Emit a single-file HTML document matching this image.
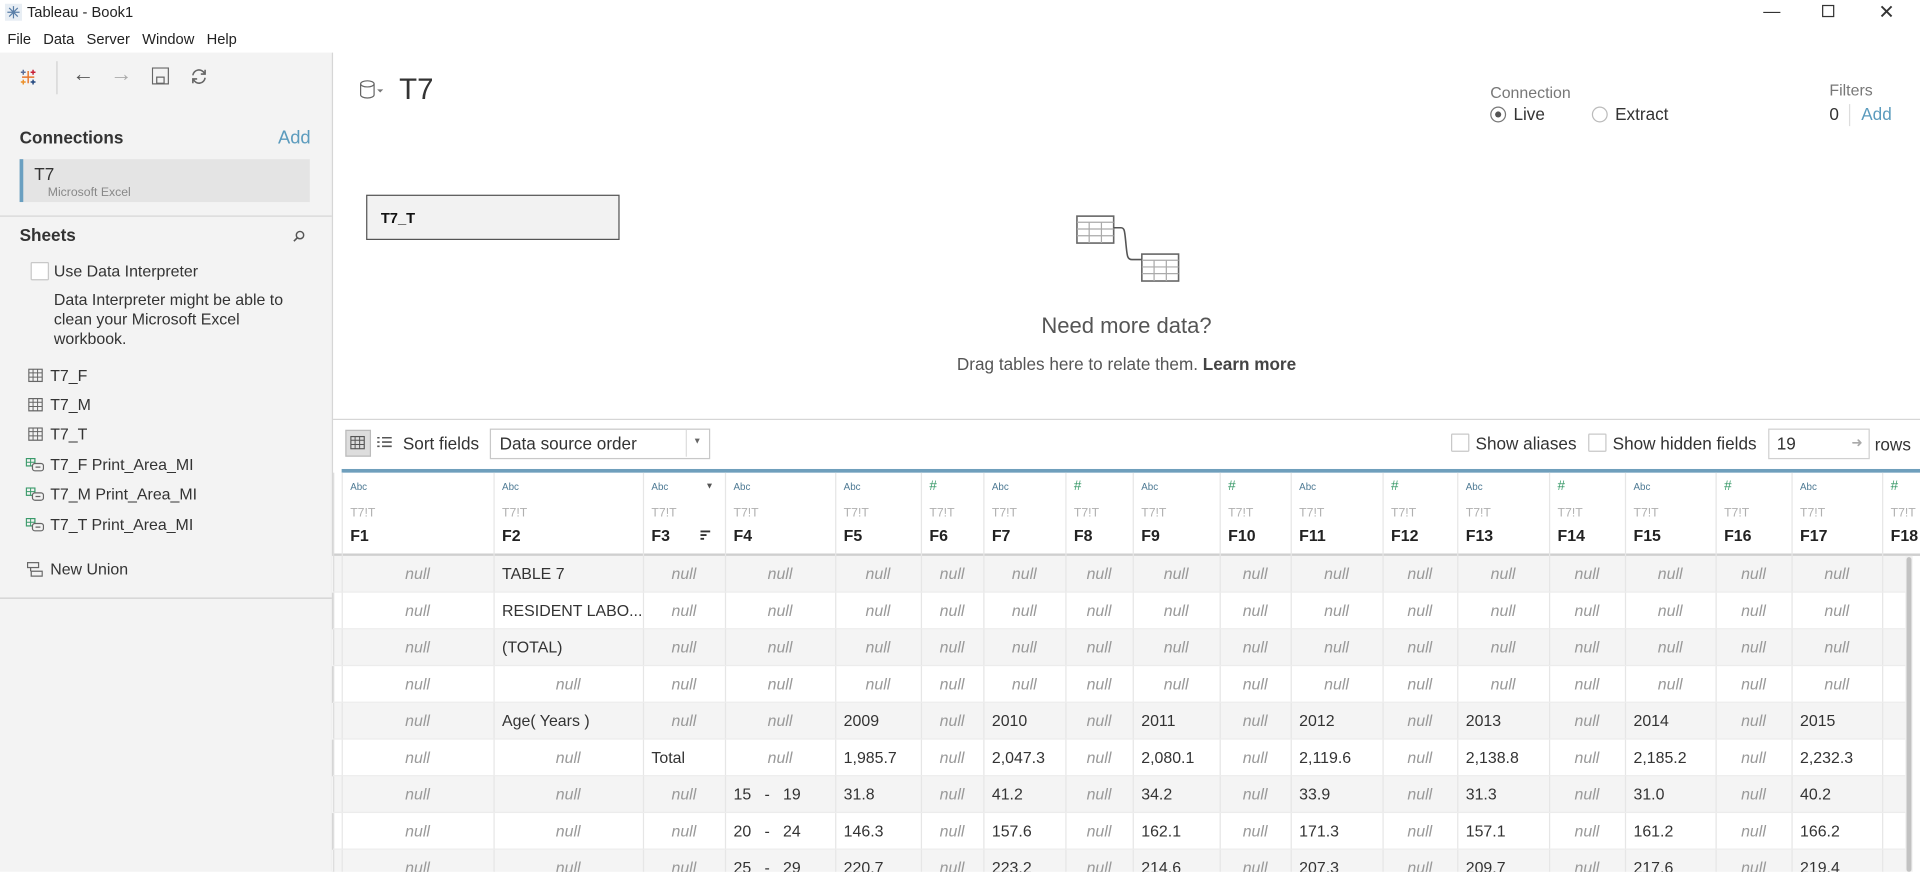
<!DOCTYPE html>
<html><head><meta charset="utf-8">
<style>
html,body{margin:0;padding:0;width:1920px;height:872px;overflow:hidden;background:#fff}
#w{position:absolute;left:0;top:0;width:1568px;height:712px;transform:scale(1.22449);transform-origin:0 0;font-family:"Liberation Sans",sans-serif;color:#333;overflow:hidden}
.a{position:absolute;white-space:nowrap}
.n{font-family:"Liberation Sans Narrow","Liberation Sans",sans-serif}
.left{position:absolute;left:0;top:43px;width:271px;height:669px;background:#f3f3f3;border-right:1px solid #d6d6d6}
.hl{position:absolute;height:1px;background:#d6d6d6}
.col{position:absolute;top:386px;height:326px;border-left:1px solid #e6e6e6}
.abc{font-size:8px;color:#4e7a94}
.hash{font-size:11px;color:#3a9a6a}
.src{font-size:10px;color:#b0b0b0}
.fl{font-size:13px;font-weight:bold;color:#222}
.row{position:absolute;left:271px;width:1285px;height:30px}
.cell{position:absolute;font-size:13px;line-height:30px}
.null{font-style:italic;color:#999;text-align:center}
.cb{position:absolute;width:13px;height:13px;border:1px solid #c8c8c8;background:#fff;border-radius:1px}
</style></head><body><div id="w">
<svg class="a" style="left:4px;top:3px" width="14" height="14" viewBox="0 0 14 14"><rect x="0" y="0" width="14" height="14" fill="#e8eef4"/><g stroke="#5a7fa8" stroke-width="1"><path d="M7 2v10M2 7h10M3.5 3.5l7 7M10.5 3.5l-7 7"/></g></svg>
<div class="a" style="left:22px;top:3px;font-size:12px;color:#222">Tableau - Book1</div>
<div class="a" style="left:1440px;top:1px;font-size:14px;color:#333">&#8212;</div>
<div class="a" style="left:1488px;top:4px;width:8px;height:8px;border:1px solid #333"></div>
<div class="a" style="left:1534px;top:0px;font-size:16px;color:#333">&#10005;</div>
<div class="a" style="left:6px;top:25px;font-size:12px;color:#222;word-spacing:0">File&nbsp;&nbsp; Data&nbsp;&nbsp; Server&nbsp;&nbsp; Window&nbsp;&nbsp; Help</div>

<div class="left"></div>
<svg class="a" style="left:15px;top:55px" width="16" height="16" viewBox="0 0 16 16"><g stroke-width="1.2"><path d="M8 3v10M3 8h10" stroke="#e8762d"/><path d="M4 2v4M2 4h4" stroke="#5b6f9a"/><path d="M12 2v4M10 4h4" stroke="#c72037"/><path d="M4 10v4M2 12h4" stroke="#eb912b"/><path d="M12 10v4M10 12h4" stroke="#1f457e"/></g></svg>
<div class="a" style="left:46px;top:50px;width:1px;height:27px;background:#d0d0d0"></div>
<div class="a" style="left:59px;top:50px;font-size:18px;color:#555">&#8592;</div>
<div class="a" style="left:90px;top:50px;font-size:18px;color:#aaa">&#8594;</div>
<svg class="a" style="left:124px;top:55px" width="14" height="14"><rect x="0.5" y="0.5" width="13" height="13" fill="none" stroke="#666"/><rect x="4" y="8" width="6" height="5" fill="none" stroke="#666"/></svg>
<svg class="a" style="left:155px;top:55px" width="15" height="15" viewBox="0 0 15 15"><path d="M2.5 6.5A5 5 0 0 1 12 5M12.5 8.5A5 5 0 0 1 3 10" fill="none" stroke="#666" stroke-width="1.3"/><path d="M12.5 2v3.5H9M2.5 13V9.5H6" fill="none" stroke="#666" stroke-width="1.3"/></svg>
<div class="a" style="left:16px;top:104px;font-size:14px;font-weight:bold;color:#333">Connections</div>
<div class="a" style="left:227px;top:104px;font-size:15px;color:#5b9bbd">Add</div>
<div class="a" style="left:16px;top:130px;width:234px;height:35px;background:#e4e4e4;border-left:3px solid #6a9fc0"></div>
<div class="a" style="left:28px;top:134px;font-size:14px;color:#333">T7</div>
<div class="a" style="left:39px;top:152px;font-size:10px;color:#888">Microsoft Excel</div>
<div class="hl" style="left:0;top:176px;width:271px"></div>
<div class="a" style="left:16px;top:184px;font-size:14px;font-weight:bold;color:#333">Sheets</div>
<svg class="a" style="left:239px;top:188px" width="10" height="10"><circle cx="6" cy="4" r="3" fill="none" stroke="#555" stroke-width="1.2"/><path d="M4 6L1 9" stroke="#555" stroke-width="1.3"/></svg>
<div class="cb" style="left:25px;top:214px"></div>
<div class="a" style="left:44px;top:214px;font-size:13px;color:#333">Use Data Interpreter</div>
<div class="a" style="left:44px;top:237px;font-size:13px;color:#333;line-height:16px">Data Interpreter might be able to<br>clean your Microsoft Excel<br>workbook.</div>
<svg class="a" style="left:23px;top:301px" width="12" height="12"><rect x="0.5" y="0.5" width="11" height="10" fill="none" stroke="#666"/><path d="M0.5 3.5h11M0.5 7h11M4 0.5v10M7.7 0.5v10" stroke="#666" stroke-width="0.8"/></svg>
<div class="a" style="left:41px;top:299px;font-size:13px">T7_F</div>
<svg class="a" style="left:23px;top:325px" width="12" height="12"><rect x="0.5" y="0.5" width="11" height="10" fill="none" stroke="#666"/><path d="M0.5 3.5h11M0.5 7h11M4 0.5v10M7.7 0.5v10" stroke="#666" stroke-width="0.8"/></svg>
<div class="a" style="left:41px;top:323px;font-size:13px">T7_M</div>
<svg class="a" style="left:23px;top:349px" width="12" height="12"><rect x="0.5" y="0.5" width="11" height="10" fill="none" stroke="#666"/><path d="M0.5 3.5h11M0.5 7h11M4 0.5v10M7.7 0.5v10" stroke="#666" stroke-width="0.8"/></svg>
<div class="a" style="left:41px;top:347px;font-size:13px">T7_T</div>
<svg class="a" style="left:21px;top:374px" width="15" height="12"><rect x="0.5" y="0.5" width="7" height="6" fill="none" stroke="#3a9a6a"/><path d="M0.5 3.5h7M4 0.5v6" stroke="#3a9a6a" stroke-width="0.8"/><rect x="5.5" y="4.5" width="9" height="6" rx="2" fill="#f3f3f3" stroke="#666"/><path d="M8 7.5h4" stroke="#666"/></svg>
<div class="a" style="left:41px;top:372px;font-size:13px">T7_F Print_Area_MI</div>
<svg class="a" style="left:21px;top:398px" width="15" height="12"><rect x="0.5" y="0.5" width="7" height="6" fill="none" stroke="#3a9a6a"/><path d="M0.5 3.5h7M4 0.5v6" stroke="#3a9a6a" stroke-width="0.8"/><rect x="5.5" y="4.5" width="9" height="6" rx="2" fill="#f3f3f3" stroke="#666"/><path d="M8 7.5h4" stroke="#666"/></svg>
<div class="a" style="left:41px;top:396px;font-size:13px">T7_M Print_Area_MI</div>
<svg class="a" style="left:21px;top:423px" width="15" height="12"><rect x="0.5" y="0.5" width="7" height="6" fill="none" stroke="#3a9a6a"/><path d="M0.5 3.5h7M4 0.5v6" stroke="#3a9a6a" stroke-width="0.8"/><rect x="5.5" y="4.5" width="9" height="6" rx="2" fill="#f3f3f3" stroke="#666"/><path d="M8 7.5h4" stroke="#666"/></svg>
<div class="a" style="left:41px;top:421px;font-size:13px">T7_T Print_Area_MI</div>
<svg class="a" style="left:22px;top:459px" width="13" height="13"><rect x="0.5" y="0.5" width="9" height="4" fill="none" stroke="#666"/><rect x="3.5" y="7.5" width="9" height="4" fill="none" stroke="#666"/><path d="M3 4.5v3" stroke="#666"/></svg>
<div class="a" style="left:41px;top:457px;font-size:13px">New Union</div>
<div class="hl" style="left:0;top:488px;width:271px;background:#cfcfcf"></div>

<svg class="a" style="left:293px;top:65px" width="22" height="17"><ellipse cx="7" cy="3.5" rx="5.5" ry="2.5" fill="none" stroke="#666"/><path d="M1.5 3.5v9a5.5 2.5 0 0 0 11 0v-9" fill="none" stroke="#666"/><path d="M15 8h5l-2.5 2.5z" fill="#777"/></svg>
<div class="a" style="left:326px;top:60px;font-size:24px;color:#333">T7</div>
<div class="a" style="left:1217px;top:68px;font-size:13px;color:#777">Connection</div>
<div class="a" style="left:1217px;top:87px;width:11px;height:11px;border:1px solid #777;border-radius:50%"></div>
<div class="a" style="left:1221px;top:91px;width:5px;height:5px;background:#555;border-radius:50%"></div>
<div class="a" style="left:1236px;top:85px;font-size:14px;color:#333">Live</div>
<div class="a" style="left:1300px;top:87px;width:11px;height:11px;border:1px solid #bbb;border-radius:50%"></div>
<div class="a" style="left:1319px;top:85px;font-size:14px;color:#333">Extract</div>
<div class="a" style="left:1494px;top:66px;font-size:13px;color:#777">Filters</div>
<div class="a" style="left:1494px;top:85px;font-size:14px;color:#333">0</div>
<div class="a" style="left:1510px;top:85px;width:1px;height:18px;background:#ddd"></div>
<div class="a" style="left:1520px;top:85px;font-size:14px;color:#5b9bbd">Add</div>
<div class="a" style="left:299px;top:159px;width:205px;height:35px;background:#f2f2f2;border:1px solid #555"></div>
<div class="a" style="left:311px;top:171px;font-size:12px;font-weight:bold;color:#111">T7_T</div>
<svg class="a" style="left:876px;top:174px" width="90" height="60"><g fill="#fff" stroke="#666" stroke-width="1.3"><rect x="3.5" y="2.5" width="30" height="22"/><rect x="56.5" y="33.5" width="30" height="22"/></g><g stroke="#aaa" stroke-width="1"><path d="M3.5 7.5h30M3.5 13h30M3.5 18.5h30M13.5 7.5v17M23.5 7.5v17M56.5 38.5h30M56.5 44h30M56.5 49.5h30M66.5 38.5v17M76.5 38.5v17"/></g><path d="M33.5 12h6c3 0 3 3 4 13s1 13 5 13h8" fill="none" stroke="#555" stroke-width="1.3"/></svg>
<div class="a" style="left:720px;top:256px;width:400px;text-align:center;font-size:18px;color:#555">Need more data?</div>
<div class="a" style="left:670px;top:289px;width:500px;text-align:center;font-size:14px;color:#555">Drag tables here to relate them. <b style="color:#444">Learn more</b></div>
<div class="hl" style="left:272px;top:342px;width:1296px"></div>

<div class="a" style="left:282px;top:351px;width:19px;height:20px;background:#ddd;border:1px solid #bbb"></div>
<svg class="a" style="left:286px;top:356px" width="12" height="11"><rect x="0.5" y="0.5" width="11" height="10" fill="none" stroke="#555"/><path d="M0.5 3.5h11M0.5 7h11M4 0.5v10M7.7 0.5v10" stroke="#555" stroke-width="0.8"/></svg>
<svg class="a" style="left:308px;top:356px" width="12" height="11"><path d="M0 1.5h2M4 1.5h8M0 5h2M4 5h8M0 8.5h2M4 8.5h8" stroke="#555" stroke-width="1.3"/></svg>
<div class="a" style="left:329px;top:354px;font-size:14px;color:#333">Sort fields</div>
<div class="a" style="left:400px;top:350px;width:178px;height:23px;border:1px solid #c8c8c8;background:#fff"></div>
<div class="a" style="left:408px;top:354px;font-size:14px;color:#333">Data source order</div>
<div class="a" style="left:560px;top:351px;width:1px;height:22px;background:#ddd"></div>
<div class="a" style="left:566px;top:357px;font-size:7px;color:#666">&#9660;</div>
<div class="cb" style="left:1185px;top:354px"></div>
<div class="a" style="left:1205px;top:354px;font-size:14px;color:#333">Show aliases</div>
<div class="cb" style="left:1297px;top:354px"></div>
<div class="a" style="left:1317px;top:354px;font-size:14px;color:#333">Show hidden fields</div>
<div class="a" style="left:1444px;top:350px;width:81px;height:23px;border:1px solid #d0d0d0;background:#fff"></div>
<div class="a" style="left:1451px;top:354px;font-size:14px;color:#333">19</div>
<div class="a" style="left:1512px;top:355px;font-size:11px;color:#aaa">&#10140;</div>
<div class="a" style="left:1531px;top:355px;font-size:14px;color:#333">rows</div>

<div class="a" style="left:279px;top:383px;width:1289px;height:3px;background:#6f9fbc"></div>
<div class="a" style="left:272px;top:452px;width:1296px;height:2px;background:#cfcfcf"></div>
<div class="row" style="top:454px;background:#f4f4f4"></div>
<div class="row" style="top:514px;background:#f4f4f4"></div>
<div class="row" style="top:574px;background:#f4f4f4"></div>
<div class="row" style="top:634px;background:#f4f4f4"></div>
<div class="row" style="top:694px;background:#f4f4f4"></div>
<div class="a" style="left:272px;top:386px;width:1px;height:326px;background:#ddd"></div>
<div class="a" style="left:1556px;top:454px;width:6px;height:258px;background:#f0f0f0"></div>
<div class="a" style="left:1557px;top:455px;width:4px;height:257px;background:#c2c2c2;border-radius:2px"></div>
<div id="tbl"></div>
<script>
var cols=[279,403,525,592,682,752,803,870,925,996,1054,1129,1190,1265,1327,1401,1463,1537,1600];
var types=['a','a','a','a','a','h','a','h','a','h','a','h','a','h','a','h','a','h'];
var h='';
for(var i=0;i<18;i++){var x=cols[i],w=cols[i+1]-x;
 h+='<div class="col" style="left:'+x+'px;width:'+w+'px"></div>';
 h+=types[i]=='a'?'<div class="a abc" style="left:'+(x+7)+'px;top:393px">Abc</div>':'<div class="a hash" style="left:'+(x+7)+'px;top:391px">#</div>';
 h+='<div class="a src n" style="left:'+(x+7)+'px;top:414px">T7!T</div>';
 h+='<div class="a fl n" style="left:'+(x+7)+'px;top:430px">F'+(i+1)+'</div>';
}
h+='<div class="a" style="left:576px;top:394px;font-size:7px;color:#555">&#9660;</div>';
h+='<svg class="a" style="left:572px;top:433px" width="9" height="9"><path d="M0 1h8M0 4h5M0 7h3" stroke="#333" stroke-width="1.5"/></svg>';
var N='null';
var rows=[
[N,{t:'TABLE 7'},N,N,N,N,N,N,N,N,N,N,N,N,N,N,N],
[N,{t:'RESIDENT LABO...'},N,N,N,N,N,N,N,N,N,N,N,N,N,N,N],
[N,{t:'(TOTAL)'},N,N,N,N,N,N,N,N,N,N,N,N,N,N,N],
[N,N,N,N,N,N,N,N,N,N,N,N,N,N,N,N,N],
[N,{t:'Age( Years )'},N,N,{t:'2009'},N,{t:'2010'},N,{t:'2011'},N,{t:'2012'},N,{t:'2013'},N,{t:'2014'},N,{t:'2015'}],
[N,N,{t:'Total'},N,{t:'1,985.7'},N,{t:'2,047.3'},N,{t:'2,080.1'},N,{t:'2,119.6'},N,{t:'2,138.8'},N,{t:'2,185.2'},N,{t:'2,232.3'}],
[N,N,N,{t:'15&nbsp;&nbsp;&nbsp;-&nbsp;&nbsp;&nbsp;19'},{t:'31.8'},N,{t:'41.2'},N,{t:'34.2'},N,{t:'33.9'},N,{t:'31.3'},N,{t:'31.0'},N,{t:'40.2'}],
[N,N,N,{t:'20&nbsp;&nbsp;&nbsp;-&nbsp;&nbsp;&nbsp;24'},{t:'146.3'},N,{t:'157.6'},N,{t:'162.1'},N,{t:'171.3'},N,{t:'157.1'},N,{t:'161.2'},N,{t:'166.2'}],
[N,N,N,{t:'25&nbsp;&nbsp;&nbsp;-&nbsp;&nbsp;&nbsp;29'},{t:'220.7'},N,{t:'223.2'},N,{t:'214.6'},N,{t:'207.3'},N,{t:'209.7'},N,{t:'217.6'},N,{t:'219.4'}]
];
for(var r=0;r<rows.length;r++){var y=454+r*30;
 for(var c=0;c<17;c++){var v=rows[r][c],x=cols[c],w=cols[c+1]-x;
  if(v===N) h+='<div class="cell null n" style="left:'+x+'px;width:'+w+'px;top:'+y+'px">null</div>';
  else h+='<div class="cell n" style="left:'+(x+7)+'px;top:'+y+'px;color:#333">'+v.t+'</div>';
 }
 h+='<div class="a" style="left:272px;top:'+(y+29)+'px;width:1284px;height:1px;background:#ececec"></div>';
}
document.getElementById('tbl').innerHTML=h;
</script>
</div></body></html>
